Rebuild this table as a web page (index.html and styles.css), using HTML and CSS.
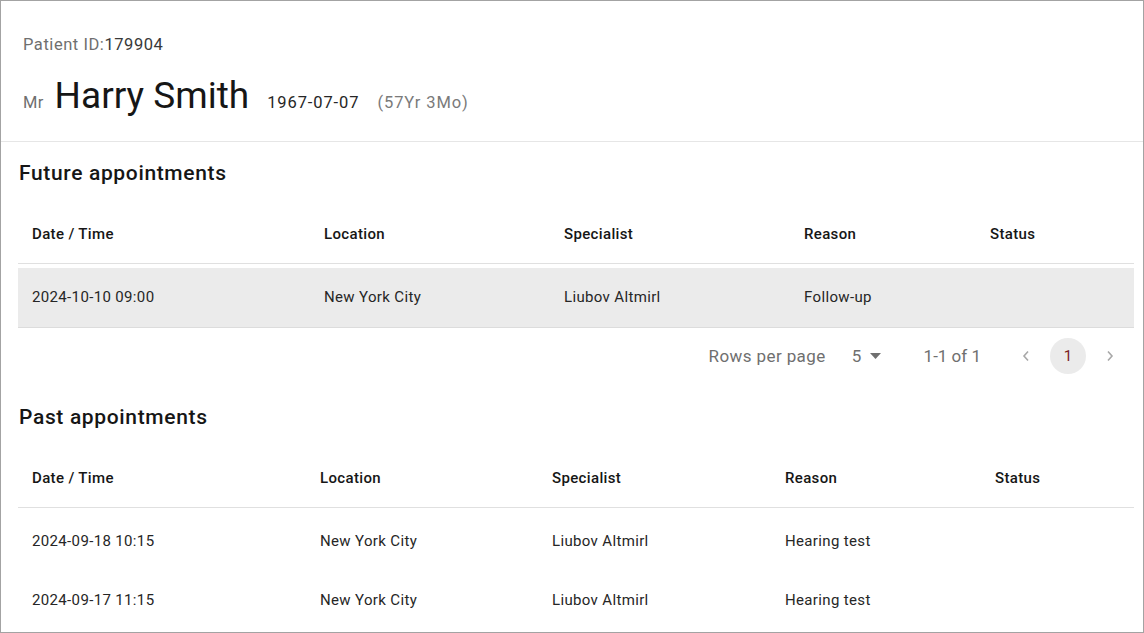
FILE: index.html
```html
<!DOCTYPE html>
<html lang="en">
<head>
<meta charset="utf-8">
<title>Patient appointments</title>
<link rel="stylesheet" href="styles.css">
</head>
<body>
<div class="page">
  <header class="patient">
    <div class="pid"><span class="pid-label">Patient ID:</span><span class="pid-value">179904</span></div>
    <div class="name-row">
      <span class="title">Mr</span>
      <span class="name">Harry Smith</span>
      <span class="dob">1967-07-07</span>
      <span class="age">(57Yr 3Mo)</span>
    </div>
  </header>

  <section class="section">
    <h2 class="section-title">Future appointments</h2>
    <div class="table future">
      <div class="thead">
        <div class="th">Date / Time</div>
        <div class="th">Location</div>
        <div class="th">Specialist</div>
        <div class="th">Reason</div>
        <div class="th">Status</div>
      </div>
      <div class="tbody">
        <div class="tr active">
          <div class="td">2024-10-10 09:00</div>
          <div class="td">New York City</div>
          <div class="td">Liubov Altmirl</div>
          <div class="td">Follow-up</div>
          <div class="td"></div>
        </div>
      </div>
    </div>
    <div class="pagination">
      <span class="rpp">Rows per page</span>
      <span class="rpp-select">5 <svg class="caret" width="11" height="6" viewBox="0 0 11 6"><path d="M0 0h11L5.5 6z" fill="#6f6f6f"/></svg></span>
      <span class="range">1-1 of 1</span>
      <span class="chev"><svg width="8" height="12" viewBox="0 0 8 12"><path d="M6 1.5L2 6l4 4.5" fill="none" stroke="#a8a8a8" stroke-width="1.6"/></svg></span>
      <span class="page-btn">1</span>
      <span class="chev"><svg width="8" height="12" viewBox="0 0 8 12"><path d="M2 1.5L6 6l-4 4.5" fill="none" stroke="#a8a8a8" stroke-width="1.6"/></svg></span>
    </div>
  </section>

  <section class="section past-section">
    <h2 class="section-title">Past appointments</h2>
    <div class="table past">
      <div class="thead">
        <div class="th">Date / Time</div>
        <div class="th">Location</div>
        <div class="th">Specialist</div>
        <div class="th">Reason</div>
        <div class="th">Status</div>
      </div>
      <div class="tbody">
        <div class="tr plain">
          <div class="td">2024-09-18 10:15</div>
          <div class="td">New York City</div>
          <div class="td">Liubov Altmirl</div>
          <div class="td">Hearing test</div>
          <div class="td"></div>
        </div>
        <div class="tr plain">
          <div class="td">2024-09-17 11:15</div>
          <div class="td">New York City</div>
          <div class="td">Liubov Altmirl</div>
          <div class="td">Hearing test</div>
          <div class="td"></div>
        </div>
      </div>
    </div>
  </section>
</div>
</body>
</html>
```

FILE: styles.css
```css
* { box-sizing: border-box; }
html, body { margin: 0; padding: 0; background: #fff; }
body {
  font-family: Roboto, "Liberation Sans", sans-serif;
  color: #161616;
}
.page {
  width: 1144px;
  height: 633px;
  border: 1px solid #a3a3a3;
  overflow: hidden;
}
.patient {
  height: 141px;
  padding: 34px 22px 0;
  border-bottom: 1px solid #e6e6e6;
}
.pid {
  font-size: 16.5px;
  line-height: 20px;
  letter-spacing: 0.55px;
}
.pid-label { color: #6f6f6f; }
.pid-value { color: #393939; }
.name-row {
  display: flex;
  align-items: baseline;
  margin-top: 19px;
}
.title {
  font-size: 16.5px;
  color: #6f6f6f;
  margin-right: 11px;
  letter-spacing: 0.3px;
}
.name {
  font-size: 37px;
  line-height: 44px;
  color: #161616;
  margin-right: 18px;
}
.dob {
  font-size: 16.5px;
  color: #262626;
  letter-spacing: 0.9px;
  margin-right: 18px;
}
.age {
  font-size: 16.5px;
  color: #7a7a7a;
  letter-spacing: 0.9px;
}
.section {
  padding: 17px 9px 0 17px;
}
.past-section { padding-top: 19px; }
.section-title {
  margin: 0;
  font-size: 21px;
  line-height: 28px;
  font-weight: 500;
  letter-spacing: 0.65px;
  color: #161616;
  padding-left: 1px;
}
.table { margin-top: 16px; }
.thead, .tr {
  display: grid;
}
.future .thead, .future .tr { grid-template-columns: 292px 240px 240px 186px 1fr; }
.past .thead, .past .tr { grid-template-columns: 288px 232px 233px 210px 1fr; }
.thead {
  height: 61px;
  border-bottom: 1px solid #e0e0e0;
  align-items: center;
  padding-top: 1px;
}
.th {
  padding-left: 14px;
  font-size: 15px;
  font-weight: 500;
  letter-spacing: 0.35px;
  color: #161616;
}
.tbody { padding-top: 4px; }
.past .tbody { padding-top: 3px; }
.tr { align-items: center; }
.tr.active {
  height: 60px;
  background: #ebebeb;
  border-bottom: 1px solid #dcdcdc;
  padding-bottom: 1px;
}
.tr.plain { height: 59px; }
.td {
  padding-left: 14px;
  font-size: 15px;
  letter-spacing: 0.35px;
  color: #262626;
}
.pagination {
  height: 56px;
  display: flex;
  align-items: center;
  justify-content: flex-end;
  padding-right: 20px;
  color: #6f6f6f;
  font-size: 17px;
  letter-spacing: 0.4px;
}
.rpp { margin-right: 26px; }
.rpp-select {
  display: flex;
  align-items: center;
  gap: 8px;
  margin-right: 43px;
}
.range { margin-right: 41px; letter-spacing: 0; }
.chev {
  display: flex;
  align-items: center;
}
.page-btn {
  width: 36px;
  height: 36px;
  border-radius: 50%;
  background: #ebebeb;
  color: #7a1f1f;
  font-size: 15px;
  letter-spacing: 0;
  display: flex;
  align-items: center;
  justify-content: center;
  margin: 0 20px;
}
```
